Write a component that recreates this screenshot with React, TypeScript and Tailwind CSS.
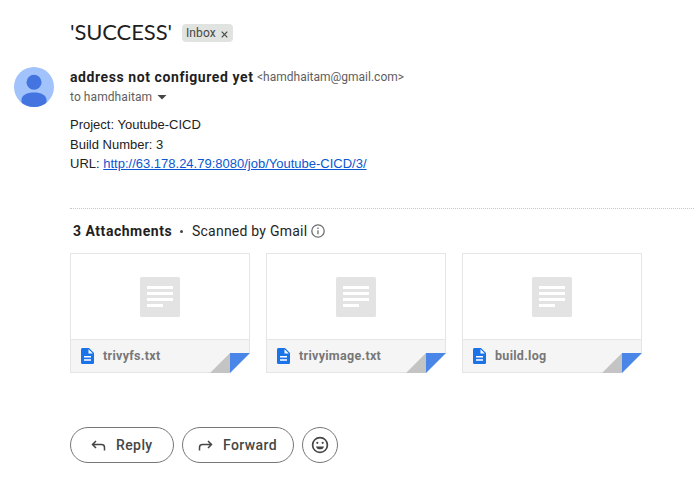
import React from "react";

const sans = "font-[Roboto,'Open_Sans',sans-serif]";

function FileCard({ name }: { name: string }) {
  return (
    <div className="relative flex h-[120px] w-[180px] flex-col border border-[#e5e5e5] bg-white">
      <div className="flex h-[85px] items-start justify-center pt-[23px]">
        <svg width="40" height="40" viewBox="0 0 40 40">
          <rect width="40" height="40" rx="1.5" fill="#e3e3e3" />
          <path d="M7 9h26v3H7zM7 15h26v3H7zM7 21h26v3H7zM7 27h16v3H7z" fill="#fff" />
        </svg>
      </div>
      <div className="flex flex-1 items-center border-t border-[#e5e5e5] bg-[#f5f5f5] pl-2.5">
        <svg width="13" height="16" viewBox="0 0 13 16" className="mr-[9px]">
          <path d="M1.6 0H8l5 5v9.4c0 .9-.7 1.6-1.6 1.6H1.6C.7 16 0 15.3 0 14.4V1.6C0 .7.7 0 1.6 0z" fill="#1a73e8" />
          <path d="M7.5 1.2v4.3h4.3zM3 8h7v1.5H3zM3 11.3h7v1.5H3z" fill="#fff" />
        </svg>
        <span className="text-[12.5px] leading-4 font-bold tracking-[0.3px] text-[#777]">{name}</span>
      </div>
      <svg className="absolute -right-px -bottom-px" width="40" height="20" viewBox="0 0 40 20">
        <path d="M20 20L40 0V20z" fill="#fff" />
        <path d="M0 20L20 0V20z" fill="#c4c4c4" />
        <path d="M20 0H40L20 20z" fill="#4986e7" />
      </svg>
    </div>
  );
}

const pill = "flex h-9 items-center rounded-full border border-[#747775] text-sm font-medium tracking-[0.4px] text-[#444746]";

export default function App() {
  return (
    <main className={`h-[489px] w-[694px] overflow-hidden bg-white text-[#1f1f1f] ${sans}`}>
      <header className="flex h-[67px] pl-[70px] pt-[19px]">
        <h1 className="-mt-px w-[112px] whitespace-nowrap font-[Lato,sans-serif] text-[22px] leading-7 tracking-[-0.1px]">'SUCCESS'</h1>
        <div className="mt-[5px] flex h-[18px] w-[51px] items-center rounded bg-[#e1e3e1] pl-1 text-xs text-[#444746]">
          <span className="tracking-[0.1px]">Inbox</span>
          <svg className="ml-[5px] mt-0.5" width="7" height="7" viewBox="0 0 7 7" stroke="#444746" strokeWidth="1.2"><path d="M.7.7l5.6 5.6M6.3.7L.7 6.300" /></svg>
        </div>
      </header>

      <section className="flex h-[141px] pl-[14px]">
        <svg width="40" height="40" viewBox="0 0 40 40" className="mr-4 shrink-0">
          <defs><clipPath id="avatar"><circle cx="20" cy="20" r="20" /></clipPath></defs>
          <g clipPath="url(#avatar)">
            <rect width="40" height="40" fill="#a1c2fa" />
            <circle cx="20" cy="15.300" r="7.500" fill="#4374e0" />
            <path d="M7.500 40v-7c0-5 5.500-7.500 12.500-7.500s12.500 2.500 12.500 7.500v7z" fill="#4374e0" />
          </g>
        </svg>
        <div>
          <div className="flex h-5 items-center whitespace-nowrap">
            <span className="w-[187px] text-sm font-bold tracking-[0.58px]">address not configured yet</span>
            <span className="text-xs text-[#5e5e5e]">&lt;hamdhaitam@gmail.com&gt;</span>
          </div>
          <div className="flex h-5 items-center text-xs text-[#5e5e5e]">
            <span className="w-[87px] tracking-[0.08px]">to hamdhaitam</span>
            <svg width="10" height="5" viewBox="0 0 10 5"><path d="M.5 0h9L5 4.500z" fill="#444746" /></svg>
          </div>
          <div className="pt-2 font-['Liberation_Sans',Arial,sans-serif] text-[13px] leading-[19.5px] text-[#222]">
            <p>Project: Youtube-CICD</p>
            <p>Build Number: 3</p>
            <p>URL: <a className="text-[#0b57d0] underline">http://63.178.24.79:8080/job/Youtube-CICD/3/</a></p>
          </div>
        </div>
      </section>

      <section className="ml-[70px] border-t border-dotted border-[#c8c8c8]">
        <div className="flex h-11 items-center whitespace-nowrap pl-[3px] text-sm">
          <span className="w-[107px] font-bold tracking-[0.52px]">3 Attachments</span>
          <span className="mr-[9px] h-[3px] w-[3px] rounded-full bg-[#444746]" />
          <span className="w-[118px] tracking-[0.23px]">Scanned by Gmail</span>
          <svg width="14" height="14" viewBox="0 0 14 14" className="ml-px" fill="none" stroke="#6d706f" strokeWidth="1.3"><circle cx="7" cy="7" r="6.2" /><path d="M7 6.200v4M7 3.500v1.400" /></svg>
        </div>
        <div className="flex gap-4">
          <FileCard name="trivyfs.txt" />
          <FileCard name="trivyimage.txt" />
          <FileCard name="build.log" />
        </div>
      </section>

      <footer className="mt-[54px] ml-[70px] flex gap-2">
        <button className={`${pill} w-[104px] pl-5`}>
          <svg width="15" height="12" viewBox="0 0 15 12" className="mr-2.5 mt-0.5" fill="none" stroke="#444746" strokeWidth="1.5"><path d="M5 1L1.500 4.500L5 8M1.500 4.500H10.500Q13.500 4.500 13.500 7.500V10.500" /></svg>
          Reply
        </button>
        <button className={`${pill} w-[112px] pl-[15px]`}>
          <svg width="15" height="12" viewBox="0 0 15 12" className="mr-2.5 mt-0.5" fill="none" stroke="#444746" strokeWidth="1.5"><path d="M10 1L13.500 4.500L10 8M13.500 4.500H4.500Q1.500 4.500 1.500 7.500V10.500" /></svg>
          Forward
        </button>
        <button className={`${pill} w-9 justify-center`}>
          <svg width="18" height="18" viewBox="0 0 18 18"><circle cx="9" cy="9" r="7.400" fill="none" stroke="#444746" strokeWidth="1.700" /><circle cx="6.300" cy="6.800" r="1.100" fill="#444746" /><circle cx="11.700" cy="6.800" r="1.100" fill="#444746" /><path d="M5 10.400h8a4.100 3.700 0 0 1-8 0z" fill="#444746" /></svg>
        </button>
      </footer>
    </main>
  );
}
